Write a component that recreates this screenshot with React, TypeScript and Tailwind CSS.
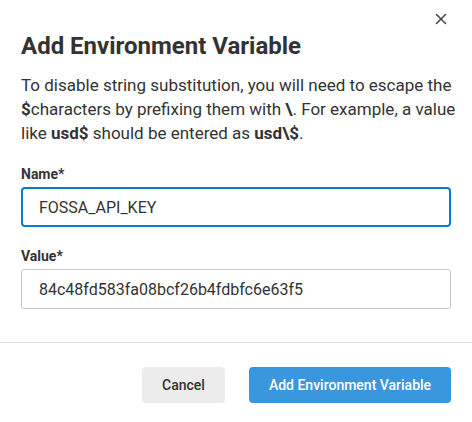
import { X } from 'lucide-react';

export default function App() {
  return (
    <div
      className="w-[472px] h-[422px] bg-white text-[#333] relative"
      style={{ fontFamily: 'Roboto, "Liberation Sans", sans-serif' }}
    >
      {/* Close */}
      <button className="absolute right-[22px] top-[10px] text-[#444]" aria-label="Close">
        <X size={18} strokeWidth={2} />
      </button>

      <div className="px-[21px] pt-[32px]">
        <h2 className="text-[24px] leading-[28px] font-bold text-[#333]">Add Environment Variable</h2>

        <p className="mt-[13px] -mr-[21px] text-[17px] leading-[24px] text-[#333] whitespace-nowrap">
          To disable string substitution, you will need to escape the
          <br />
          <b>$</b>characters by prefixing them with <b>\</b>. For example, a value
          <br />
          like <b>usd$</b> should be entered as <b>usd\$</b>.
        </p>

        <label className="block mt-[20px] text-[14px] leading-[18px] font-bold">Name*</label>
        <input
          defaultValue="FOSSA_API_KEY"
          className="mt-[4px] w-full h-[40px] px-[16px] text-[16px] text-[#333] border-2 border-[#0b7bd0] rounded-[4px] outline-none"
        />

        <label className="block mt-[20px] text-[14px] leading-[18px] font-bold">Value*</label>
        <input
          defaultValue="84c48fd583fa08bcf26b4fdbfc6e63f5"
          className="mt-[4px] w-full h-[40px] px-[17px] text-[16px] text-[#333] border border-[#c8c8c8] rounded-[3px] outline-none"
        />
      </div>

      <div className="mt-[33px] border-t border-[#e0e0e0]" />

      <div className="flex justify-end gap-[24px] px-[21px] pt-[24px]">
        <button className="h-[36px] w-[83px] rounded-[4px] bg-[#ececec] text-[14px] font-medium text-[#333]">
          Cancel
        </button>
        <button className="h-[36px] w-[202px] rounded-[4px] bg-[#3a96dd] text-[14px] font-medium text-white">
          Add Environment Variable
        </button>
      </div>
    </div>
  );
}
